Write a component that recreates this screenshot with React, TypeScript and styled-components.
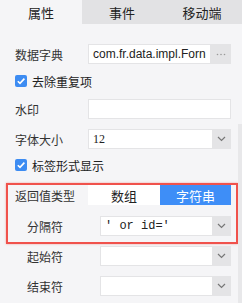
import * as React from 'react';
import styled, { createGlobalStyle } from 'styled-components';

const GlobalStyle = createGlobalStyle`
  html, body {
    margin: 0;
    padding: 0;
    background: #f5f5f7;
  }
  body {
    font-family: 'Noto Sans CJK SC', 'Liberation Sans', sans-serif;
    color: #333;
  }
`;

const Panel = styled.div`
  width: 242px;
  height: 303px;
  background: #f5f5f7;
  overflow: hidden;
`;

const Tabs = styled.div`
  display: grid;
  grid-template-columns: 82px 80px 80px;
  height: 24px;
`;

const Tab = styled.div<{ $active?: boolean }>`
  display: flex;
  align-items: center;
  justify-content: center;
  font-size: 13px;
  color: #222;
  background: ${(p) => (p.$active ? '#f5f5f7' : '#e2e2e4')};
`;

const Body = styled.div`
  display: flex;
`;

const Content = styled.div`
  flex: 1;
  min-width: 0;
  padding: 20px 7px 0 15px;
`;

const Track = styled.div`
  width: 4px;
  flex-shrink: 0;
  margin-top: 100px;
  height: 179px;
  background: #e8e8ea;
`;

const Row = styled.div<{ $gap?: number }>`
  display: flex;
  align-items: center;
  height: 20px;
  margin-top: ${(p) => p.$gap ?? 0}px;
`;

const Label = styled.div<{ $sub?: boolean }>`
  width: ${(p) => (p.$sub ? 85 : 73)}px;
  padding-left: ${(p) => (p.$sub ? 12 : 0)}px;
  box-sizing: border-box;
  font-size: 12px;
  color: #333;
  flex-shrink: 0;
  white-space: nowrap;
`;

const Field = styled.div`
  flex: 1;
  display: flex;
  height: 20px;
  background: #fff;
  box-sizing: border-box;
  border: 1px solid #e4e4e6;
  min-width: 0;
`;

const FieldText = styled.div<{ $font?: string }>`
  flex: 1;
  min-width: 0;
  overflow: hidden;
  white-space: nowrap;
  padding-left: 4px;
  font-size: 12px;
  line-height: 18px;
  color: #222;
  font-family: ${(p) => p.$font ?? "'Liberation Sans', sans-serif"};
`;

const SideButton = styled.div<{ $w: number }>`
  width: ${(p) => p.$w}px;
  flex-shrink: 0;
  display: flex;
  align-items: center;
  justify-content: center;
  background: #e4e4e6;
  margin: -1px -1px -1px 0;
`;

const Check = styled.div`
  width: 12px;
  height: 12px;
  border-radius: 2px;
  background: #3d8cf2;
  display: flex;
  align-items: center;
  justify-content: center;
  margin-right: 5px;
`;

const CheckText = styled.span`
  font-size: 12px;
  color: #222;
`;

const Group = styled.div`
  margin: 8px -7px 0 -9px;
  padding: 0 5px 6px 7px;
  border: 2px solid #f0524c;
  box-shadow: 0 0 2px rgba(240, 82, 76, 0.5);
`;

const Segment = styled.div`
  flex: 1;
  display: grid;
  grid-template-columns: 72px 71px;
  height: 20px;
`;

const SegItem = styled.div<{ $on?: boolean }>`
  display: flex;
  align-items: center;
  justify-content: center;
  font-size: 13px;
  background: ${(p) => (p.$on ? '#3e8ef7' : '#fff')};
  color: ${(p) => (p.$on ? '#fff' : '#222')};
`;

const Chevron = () => (
  <svg width="9" height="6" viewBox="0 0 9 6">
    <path d="M1 1 L4.5 4.5 L8 1" fill="none" stroke="#777" strokeWidth="1.2" />
  </svg>
);

const Dots = () => (
  <svg width="10" height="3" viewBox="0 0 10 3">
    <circle cx="1.5" cy="1.5" r="0.8" fill="#999" />
    <circle cx="5" cy="1.5" r="0.8" fill="#999" />
    <circle cx="8.5" cy="1.5" r="0.8" fill="#999" />
  </svg>
);

const CheckMark = () => (
  <svg width="10" height="10" viewBox="0 0 10 10">
    <path d="M1.8 5.2 L4 7.4 L8.4 2.6" fill="none" stroke="#fff" strokeWidth="1.6" />
  </svg>
);

const Select = ({ value, font }: { value?: string; font?: string }) => (
  <Field>
    <FieldText $font={font}>{value}</FieldText>
    <SideButton $w={19}>
      <Chevron />
    </SideButton>
  </Field>
);

export default function App() {
  return (
    <Panel>
      <GlobalStyle />
      <Tabs>
        <Tab $active>属性</Tab>
        <Tab>事件</Tab>
        <Tab>移动端</Tab>
      </Tabs>
      <Body>
        <Content>
          <Row>
            <Label>数据字典</Label>
            <Field>
              <FieldText>com.fr.data.impl.Forn</FieldText>
              <SideButton $w={21}>
                <Dots />
              </SideButton>
            </Field>
          </Row>
          <Row $gap={7}>
            <Check>
              <CheckMark />
            </Check>
            <CheckText>去除重复项</CheckText>
          </Row>
          <Row $gap={8}>
            <Label>水印</Label>
            <Field />
          </Row>
          <Row $gap={10}>
            <Label>字体大小</Label>
            <Select value="12" font="'Liberation Serif', serif" />
          </Row>
          <Row $gap={6}>
            <Check>
              <CheckMark />
            </Check>
            <CheckText>标签形式显示</CheckText>
          </Row>
          <Group>
            <Row>
              <Label>返回值类型</Label>
              <Segment>
                <SegItem>数组</SegItem>
                <SegItem $on>字符串</SegItem>
              </Segment>
            </Row>
            <Row $gap={11}>
              <Label $sub>分隔符</Label>
              <Select value="' or id='" font="'Liberation Mono', monospace" />
            </Row>
          </Group>
          <Row $gap={2}>
            <Label $sub>起始符</Label>
            <Select />
          </Row>
          <Row $gap={10}>
            <Label $sub>结束符</Label>
            <Select />
          </Row>
        </Content>
        <Track />
      </Body>
    </Panel>
  );
}
